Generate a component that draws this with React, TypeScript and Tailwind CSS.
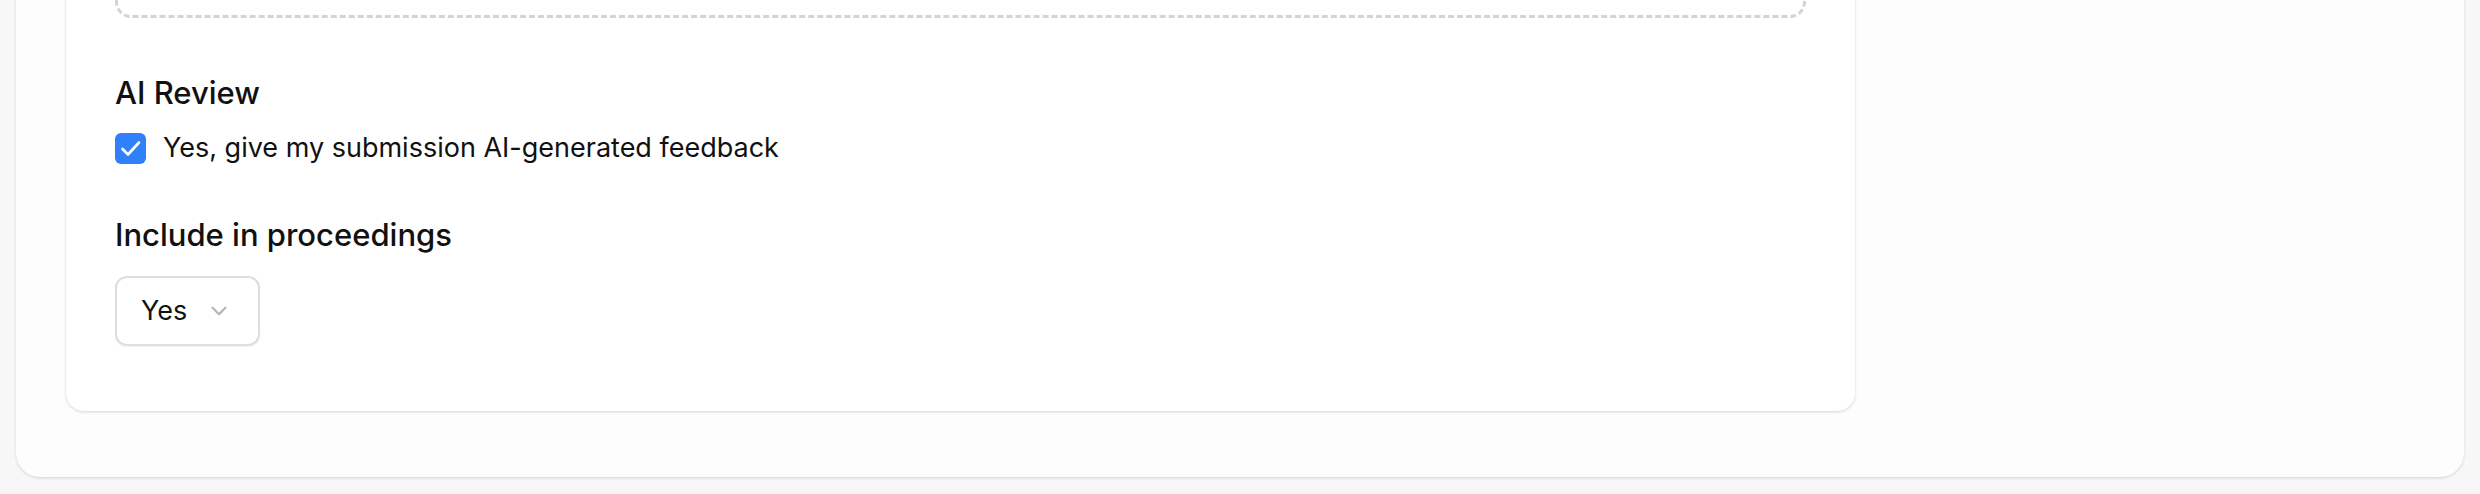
import { ChevronDown } from "lucide-react";

function Heading({ children }: { children: React.ReactNode }) {
  return <h3 className="text-[31px] leading-[38px] font-medium text-[#111111]">{children}</h3>;
}

export default function App() {
  return (
    <div
      className="min-h-[494px] bg-[#f7f7f7] px-[16px] pb-[16px] overflow-hidden"
      style={{ fontFamily: "Inter, 'Noto Sans', sans-serif" }}
    >
      <div className="-mt-[40px] rounded-b-[24px] bg-[#fdfdfd] pl-[50px] pr-[609px] pb-[66px] shadow-[0_1px_3px_rgba(0,0,0,0.14)]">
        <div className="rounded-[18px] bg-white px-[49px] pb-[65px] shadow-[0_1px_3px_rgba(0,0,0,0.16)]">
          <div className="h-[58px] rounded-b-[16px] border-[3px] border-t-0 border-dashed border-[#d4d4d4]" />

          <div className="mt-[56px]">
            <Heading>AI Review</Heading>
            <label className="mt-[20px] flex items-center gap-[17px]">
              <span className="flex h-[31px] w-[31px] items-center justify-center rounded-[6px] bg-[#2f80fa]">
                <svg viewBox="0 0 31 31" className="h-[31px] w-[31px]" fill="none">
                  <polyline
                    points="7.5,16 13,21.5 24,9.5"
                    stroke="white"
                    strokeWidth="2.6"
                    strokeLinecap="round"
                    strokeLinejoin="round"
                  />
                </svg>
              </span>
              <span className="text-[27px] leading-[32px] text-[#111111]">
                Yes, give my submission AI-generated feedback
              </span>
            </label>
          </div>

          <div className="mt-[52px]">
            <Heading>Include in proceedings</Heading>
            <button className="mt-[22px] flex h-[70px] w-[145px] items-center rounded-[12px] border-2 border-[#dedede] bg-white pl-[24px] shadow-[0_1px_2px_rgba(0,0,0,0.06)]">
              <span className="text-[27px] leading-[32px] text-[#111111]">Yes</span>
              <ChevronDown className="ml-[19px] h-[26px] w-[26px] text-[#b5b5b5]" strokeWidth={2} />
            </button>
          </div>
        </div>
      </div>
    </div>
  );
}
